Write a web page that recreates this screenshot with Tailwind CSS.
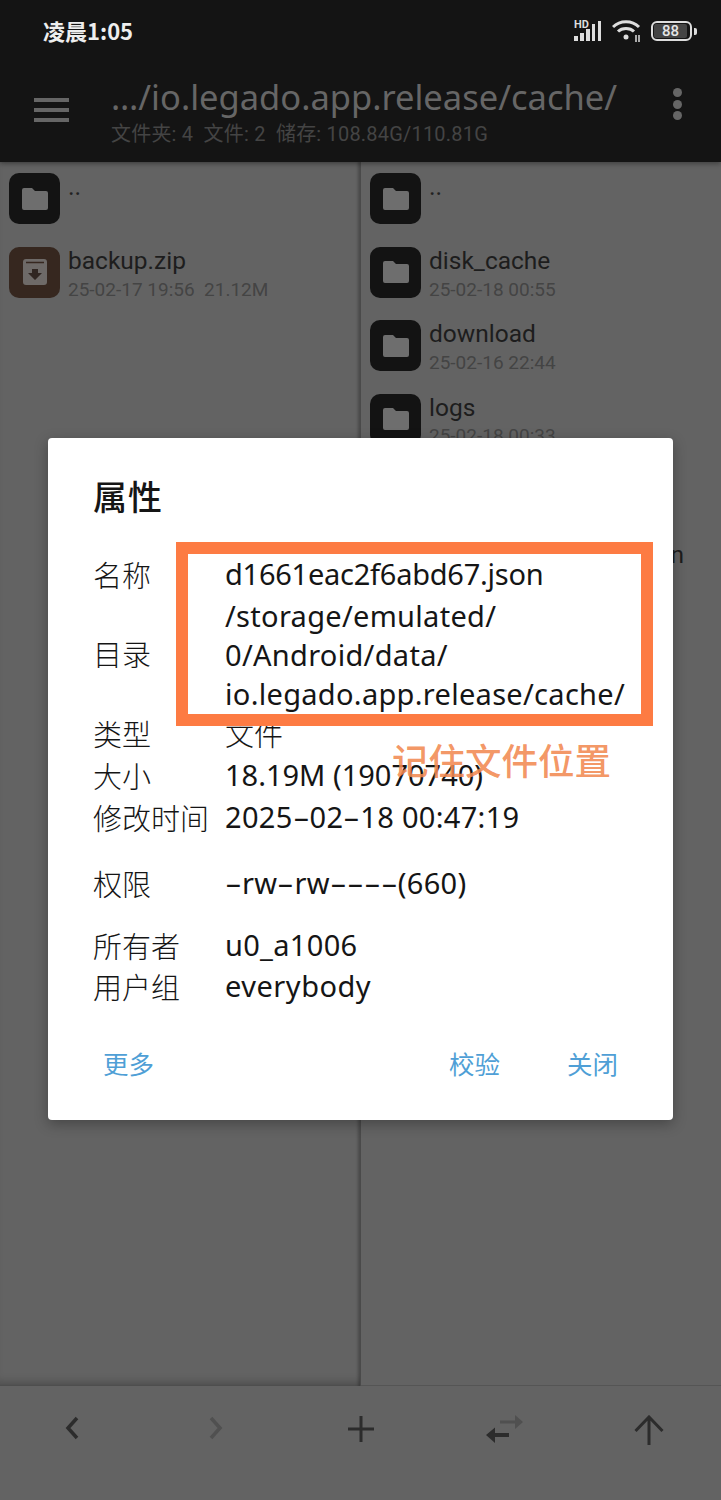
<!DOCTYPE html>
<html lang="zh">
<head>
<meta charset="utf-8">
<script src="https://cdn.jsdelivr.net/npm/@tailwindcss/browser@4"></script>
</head>
<body class="bg-[#636363]">
<div class="relative w-[721px] h-[1500px] overflow-hidden flex flex-col bg-[#636363] font-['Roboto','Noto_Sans_CJK_SC',sans-serif]">

  <!-- top -->
  <header class="h-[162px] shrink-0 bg-[#141414] flex flex-col z-10 shadow-[0_2px_5px_rgba(0,0,0,0.35)]">
    <div class="h-[62px] flex items-center pl-[43px] pr-[24px] justify-between">
      <span class="text-[22px] font-bold text-[#eeeeee] leading-none font-['Noto_Sans_CJK_SC',sans-serif] mt-[-2px]">凌晨1:05</span>
      <div class="flex items-center gap-[10px]">
        <div class="relative w-[28px] h-[22px]">
          <span class="absolute left-0 top-[-1px] text-[11px] font-bold leading-none text-[#dddddd]">HD</span>
          <svg width="28" height="22" viewBox="0 0 28 22" fill="#dddddd"><rect x="0" y="16" width="4" height="5"/><rect x="6" y="13" width="4" height="8"/><rect x="12" y="9" width="4" height="12"/><rect x="18" y="4" width="3" height="17"/><rect x="24" y="1" width="3" height="20"/></svg>
        </div>
        <svg width="29" height="22" viewBox="0 0 29 22" fill="none" stroke="#dddddd" stroke-width="3"><path d="M1 7 C8 0 20 0 27 7"/><path d="M6 11.500 C10 7.500 18 7.500 22 11.500"/><circle cx="14" cy="17" r="2.500" fill="#dddddd" stroke="none"/><path d="M24 15v7M27 15v7" stroke-width="1.500"/></svg>
        <div class="flex items-center gap-[2px]">
          <div class="w-[41px] h-[20px] rounded-[6px] border-2 border-[#dddddd] px-[1px] py-[1px]">
            <div class="h-full w-[33px] rounded-[2px] bg-[#444444] flex items-center justify-center text-[15px] font-medium leading-none text-[#e5e5e5]">88</div>
          </div>
          <div class="w-[3px] h-[7px] rounded-r-[2px] bg-[#dddddd]"></div>
        </div>
      </div>
    </div>
    <div class="flex-1 flex items-start pl-[34px] pr-[39px]">
      <svg class="mt-[36px] shrink-0" width="35" height="24" viewBox="0 0 35 24" fill="#666666"><rect width="35" height="4"/><rect y="10" width="35" height="4"/><rect y="20" width="35" height="4"/></svg>
      <div class="ml-[43px] flex-1 min-w-0">
        <div class="text-[34.500px] leading-[40px] mt-[15px] ml-[-1px] text-[#666666] whitespace-nowrap font-['Noto_Sans','Noto_Sans_CJK_SC',sans-serif]">…/io.legado.app.release/cache/</div>
        <div class="text-[20px] leading-[24px] mt-[5px] ml-[-1px] tracking-[0.2px] text-[#444444] whitespace-pre">文件夹: 4  文件: 2  储存: 108.84G/110.81G</div>
      </div>
      <div class="mt-[26px] flex flex-col gap-[2.500px] shrink-0">
        <div class="w-[9px] h-[9px] rounded-full bg-[#666666]"></div>
        <div class="w-[9px] h-[9px] rounded-full bg-[#666666]"></div>
        <div class="w-[9px] h-[9px] rounded-full bg-[#666666]"></div>
      </div>
    </div>
  </header>

  <!-- panels -->
  <main class="flex-1 min-h-0 flex">
    <section class="w-[361px] shrink-0 pt-[11px] pl-[9px] border-r border-[#4a4a4a] shadow-[inset_0_-10px_8px_-6px_rgba(0,0,0,0.22),inset_-3px_0_3px_-1px_rgba(0,0,0,0.25)]">
      <div class="h-[73.500px] flex gap-[8px]">
        <div class="w-[51px] h-[51px] rounded-[10px] bg-[#131313] flex items-center justify-center">
          <svg width="26" height="22" viewBox="0 0 26 22" fill="#6e6e6e"><path d="M2 0h8l3 3h11a2 2 0 0 1 2 2v15a2 2 0 0 1-2 2H2a2 2 0 0 1-2-2V2a2 2 0 0 1 2-2z"/></svg>
        </div>
        <div class="text-[25px] leading-[30px] text-[#222222] mt-[-1px]">..</div>
      </div>
      <div class="h-[73.500px] flex gap-[8px]">
        <div class="w-[51px] h-[51px] rounded-[10px] bg-[#36271f] flex items-center justify-center">
          <svg width="24" height="26" viewBox="0 0 24 26"><rect width="24" height="26" rx="3" fill="#6e6a68"/><path d="M3 3.500h18" stroke="#36271f" stroke-width="1.500"/><path d="M9 10h6v4h4l-7 7-7-7h4z" fill="#302622"/></svg>
        </div>
        <div>
          <div class="text-[24.500px] leading-[30px] text-[#1d1d1d] mt-[-1px]">backup.zip</div>
          <div class="text-[19px] leading-[24px] mt-[2px] text-[#444444] whitespace-pre">25-02-17 19:56  21.12M</div>
        </div>
      </div>
    </section>
    <section class="flex-1 pt-[11px] pl-[9px] overflow-hidden border-b border-[#555555]">
      <div class="h-[73.500px] flex gap-[8px]">
        <div class="w-[51px] h-[51px] rounded-[10px] bg-[#131313] flex items-center justify-center">
          <svg width="26" height="22" viewBox="0 0 26 22" fill="#6e6e6e"><path d="M2 0h8l3 3h11a2 2 0 0 1 2 2v15a2 2 0 0 1-2 2H2a2 2 0 0 1-2-2V2a2 2 0 0 1 2-2z"/></svg>
        </div>
        <div class="text-[25px] leading-[30px] text-[#222222] mt-[-1px]">..</div>
      </div>
      <div class="h-[73.500px] flex gap-[8px]">
        <div class="w-[51px] h-[51px] rounded-[10px] bg-[#131313] flex items-center justify-center">
          <svg width="26" height="22" viewBox="0 0 26 22" fill="#6e6e6e"><path d="M2 0h8l3 3h11a2 2 0 0 1 2 2v15a2 2 0 0 1-2 2H2a2 2 0 0 1-2-2V2a2 2 0 0 1 2-2z"/></svg>
        </div>
        <div>
          <div class="text-[24.500px] leading-[30px] text-[#1d1d1d] mt-[-1px]">disk_cache</div>
          <div class="text-[19px] leading-[24px] mt-[2px] text-[#444444]">25-02-18 00:55</div>
        </div>
      </div>
      <div class="h-[73.500px] flex gap-[8px]">
        <div class="w-[51px] h-[51px] rounded-[10px] bg-[#131313] flex items-center justify-center">
          <svg width="26" height="22" viewBox="0 0 26 22" fill="#6e6e6e"><path d="M2 0h8l3 3h11a2 2 0 0 1 2 2v15a2 2 0 0 1-2 2H2a2 2 0 0 1-2-2V2a2 2 0 0 1 2-2z"/></svg>
        </div>
        <div>
          <div class="text-[24.500px] leading-[30px] text-[#1d1d1d] mt-[-1px]">download</div>
          <div class="text-[19px] leading-[24px] mt-[2px] text-[#444444]">25-02-16 22:44</div>
        </div>
      </div>
      <div class="h-[73.500px] flex gap-[8px]">
        <div class="w-[51px] h-[51px] rounded-[10px] bg-[#131313] flex items-center justify-center">
          <svg width="26" height="22" viewBox="0 0 26 22" fill="#6e6e6e"><path d="M2 0h8l3 3h11a2 2 0 0 1 2 2v15a2 2 0 0 1-2 2H2a2 2 0 0 1-2-2V2a2 2 0 0 1 2-2z"/></svg>
        </div>
        <div>
          <div class="text-[24.500px] leading-[30px] text-[#1d1d1d] mt-[-1px]">logs</div>
          <div class="text-[19px] leading-[24px] mt-[1px] text-[#444444]">25-02-18 00:33</div>
        </div>
      </div>
      <div class="h-[73.500px]"></div>
      <div class="h-[73.500px] pl-[49px] text-[24.500px] leading-[28px] text-[#1d1d1d] whitespace-nowrap">d1661eac2f6abd67.json</div>
    </section>
  </main>

  <!-- bottom bar -->
  <footer class="h-[114px] shrink-0 relative flex items-start pt-[30px] px-[6px] justify-between">
    <div class="w-[132px] h-[32px] flex justify-center"><svg width="16" height="24" viewBox="0 0 16 24" fill="none" stroke="#2c2c2c" stroke-width="3.500"><path d="M13 2 L4 12 L13 22"/></svg></div>
    <div class="w-[132px] h-[32px] flex justify-center"><svg width="16" height="24" viewBox="0 0 16 24" fill="none" stroke="#505050" stroke-width="3.500"><path d="M3 2 L12 12 L3 22"/></svg></div>
    <div class="w-[132px] h-[32px] flex justify-center"><svg width="26" height="26" viewBox="0 0 26 26" fill="#2c2c2c"><rect x="11.500" width="3" height="26"/><rect y="11.500" width="26" height="3"/></svg></div>
    <div class="w-[132px] h-[32px] flex justify-center"><svg width="37" height="30" viewBox="0 0 37 30" class="mt-[-2px]"><path d="M14 6.500h15V1l8 7-8 7v-5.500H14z" fill="#505050"/><path d="M23 19H9v-5.500L0 21l9 8v-6h14z" fill="#2c2c2c"/></svg></div>
    <div class="w-[132px] h-[32px] flex justify-center"><svg width="30" height="30" viewBox="0 0 30 30" fill="none" stroke="#2c2c2c" stroke-width="3" class="mt-[-1px]"><path d="M15 30V2M1.500 16 L15 2 L28.500 16"/></svg></div>
  </footer>

  <!-- dialog -->
  <div class="absolute left-[48px] top-[438px] w-[625px] h-[682px] bg-white rounded-[4px] shadow-[0_4px_14px_rgba(0,0,0,0.3)] z-20 pl-[45px] pr-[20px] pt-[36px] text-[#151515]">
    <h2 class="text-[34px] leading-[44px] font-medium font-['Noto_Sans_CJK_SC',sans-serif] tracking-[1px]">属性</h2>
    <dl class="mt-[35px] text-[29px] grid grid-cols-[132px_1fr] items-center leading-[40px] font-['Noto_Sans','Noto_Sans_CJK_SC',sans-serif]">
      <dt class="font-['Noto_Sans_CJK_SC',sans-serif] font-light">名称</dt><dd class="tracking-[-0.25px] mt-[1px]">d1661eac2f6abd67.json</dd>
      <dt class="font-['Noto_Sans_CJK_SC',sans-serif] font-light mb-[2px]">目录</dt><dd class="whitespace-pre leading-[39px] pt-[2px] tracking-[0.3px]">/storage/emulated/
0/Android/data/
io.legado.app.release/cache/</dd>
      <dt class="font-['Noto_Sans_CJK_SC',sans-serif] font-light">类型</dt><dd class="font-['Noto_Sans_CJK_SC',sans-serif] font-light">文件</dd>
      <dt class="font-['Noto_Sans_CJK_SC',sans-serif] font-light mt-[2px]">大小</dt><dd class="mt-[2px]">18.19M (19070740)</dd>
      <dt class="font-['Noto_Sans_CJK_SC',sans-serif] font-light mt-[2px]">修改时间</dt><dd class="mt-[2px] whitespace-nowrap tracking-[0.3px]">2025<span class="inline-block w-[17px] origin-left scale-x-[1.8]">-</span>02<span class="inline-block w-[17px] origin-left scale-x-[1.8]">-</span>18 00:47:19</dd>
      <dt class="font-['Noto_Sans_CJK_SC',sans-serif] font-light mt-[26px]">权限</dt><dd class="mt-[26px] whitespace-nowrap tracking-[0.3px]"><span class="inline-block w-[17px] origin-left scale-x-[1.8]">-</span>rw<span class="inline-block w-[17px] origin-left scale-x-[1.8]">-</span>rw<span class="inline-block w-[17px] origin-left scale-x-[1.8]">-</span><span class="inline-block w-[17px] origin-left scale-x-[1.8]">-</span><span class="inline-block w-[17px] origin-left scale-x-[1.8]">-</span><span class="inline-block w-[17px] origin-left scale-x-[1.8]">-</span>(660)</dd>
      <dt class="font-['Noto_Sans_CJK_SC',sans-serif] font-light mt-[22px]">所有者</dt><dd class="mt-[22px] tracking-[0.3px]">u0_a1006</dd>
      <dt class="font-['Noto_Sans_CJK_SC',sans-serif] font-light mt-[1px]">用户组</dt><dd class="mt-[1px] tracking-[0.5px]">everybody</dd>
    </dl>
    <div class="mt-[39px] ml-[10px] flex text-[25.500px] leading-[36px] text-[#4f9fd6] font-['Noto_Sans_CJK_SC',sans-serif]">
      <span>更多</span>
      <span class="ml-auto">校验</span>
      <span class="ml-[67px] mr-[35px]">关闭</span>
    </div>
  </div>

  <!-- annotation -->
  <div class="absolute left-[176px] top-[542px] w-[477px] h-[184px] border-[12px] border-[#fd7b43] z-30"></div>
  <div class="absolute left-[392px] top-[734px] text-[36.500px] leading-[52px] font-medium text-[#f28a52]/90 z-30 font-['Noto_Sans_CJK_SC',sans-serif] whitespace-nowrap">记住文件位置</div>
</div>
</body>
</html>
